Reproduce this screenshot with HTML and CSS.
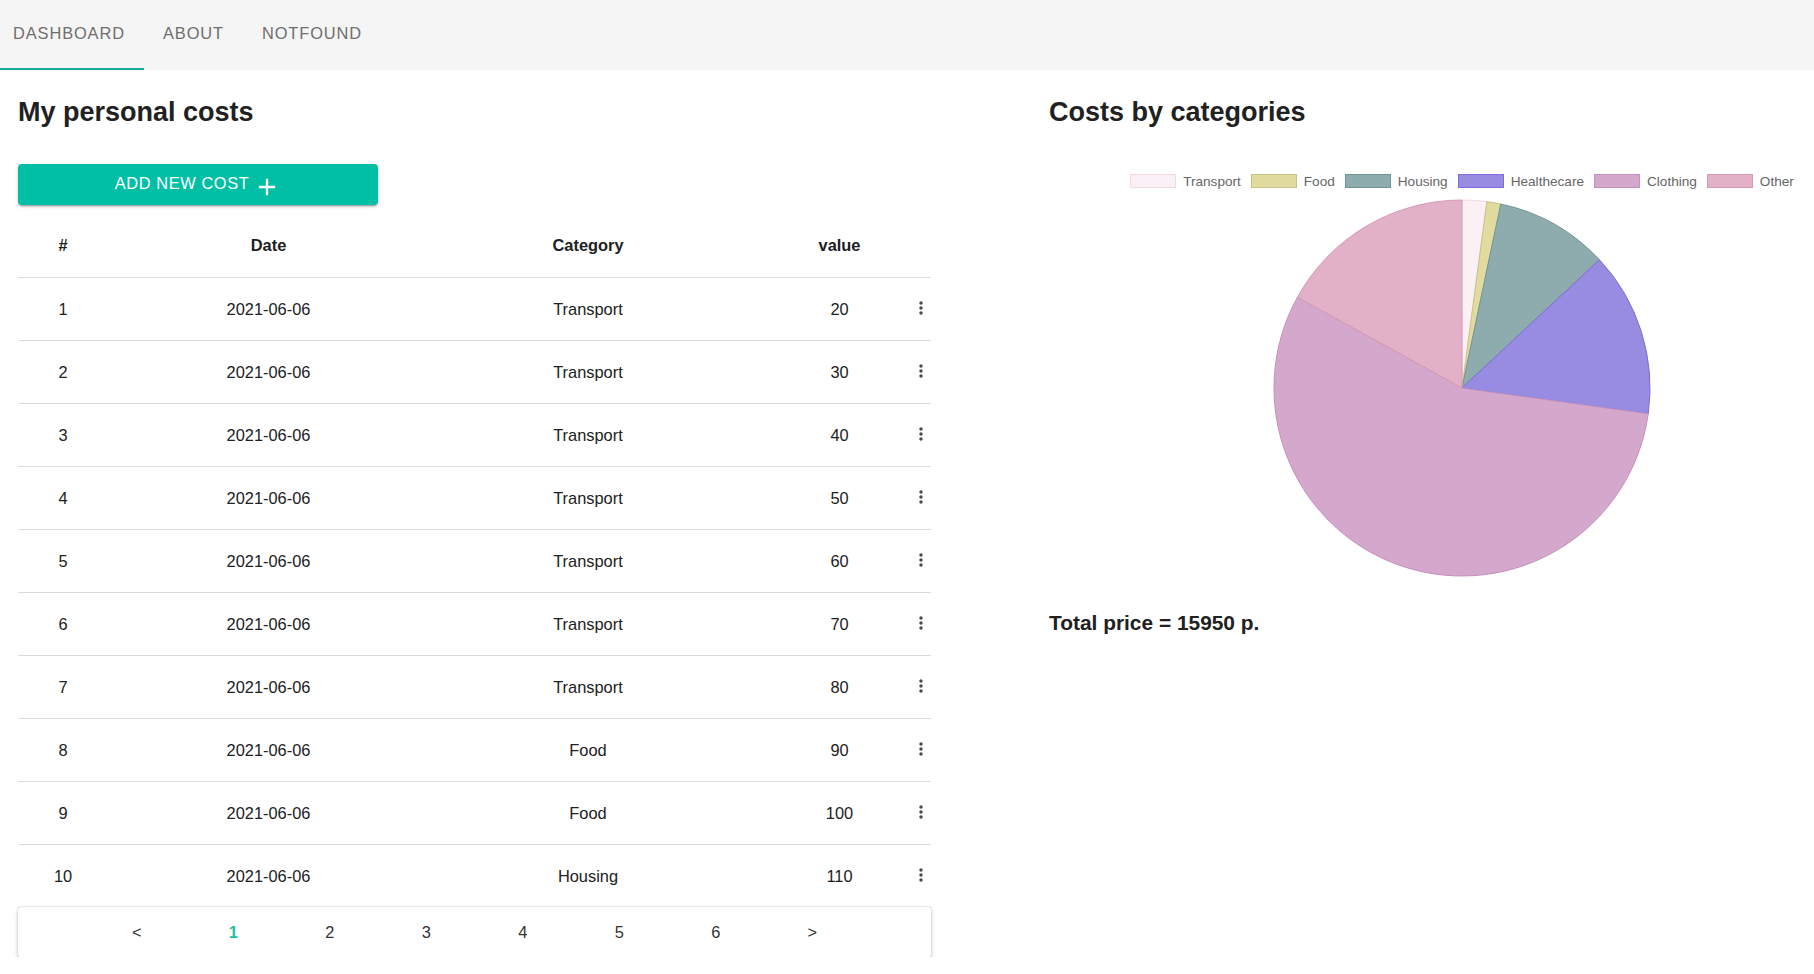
FILE: index.html
```html
<!DOCTYPE html>
<html lang="en">
<head>
<meta charset="utf-8">
<title>My personal costs</title>
<link rel="stylesheet" href="styles.css">
</head>
<body>
<header class="nav">
  <a class="tab tab-active">Dashboard</a>
  <a class="tab">About</a>
  <a class="tab">NotFound</a>
</header>
<main class="page">
  <section class="left">
    <h2 class="title">My personal costs</h2>
    <button class="add-btn"><span>Add new cost</span><svg class="plus" viewBox="0 0 24 24" width="28" height="28"><path d="M19 13h-6v6h-2v-6H5v-2h6V5h2v6h6v2z" fill="#fff"/></svg></button>
    <table class="costs">
      <colgroup><col class="c1"><col class="c2"><col class="c3"><col class="c4"><col class="c5"></colgroup>
      <thead>
        <tr><th>#</th><th>Date</th><th>Category</th><th class="val">value</th><th></th></tr>
      </thead>
      <tbody>
        <tr><td>1</td><td>2021-06-06</td><td>Transport</td><td class="val">20</td><td class="more"><svg viewBox="0 0 24 24" width="20" height="20"><path d="M12 8c1.1 0 2-.9 2-2s-.9-2-2-2-2 .9-2 2 .9 2 2 2zm0 2c-1.1 0-2 .9-2 2s.9 2 2 2 2-.9 2-2-.9-2-2-2zm0 6c-1.1 0-2 .9-2 2s.9 2 2 2 2-.9 2-2-.9-2-2-2z"/></svg></td></tr>
        <tr><td>2</td><td>2021-06-06</td><td>Transport</td><td class="val">30</td><td class="more"><svg viewBox="0 0 24 24" width="20" height="20"><path d="M12 8c1.1 0 2-.9 2-2s-.9-2-2-2-2 .9-2 2 .9 2 2 2zm0 2c-1.1 0-2 .9-2 2s.9 2 2 2 2-.9 2-2-.9-2-2-2zm0 6c-1.1 0-2 .9-2 2s.9 2 2 2 2-.9 2-2-.9-2-2-2z"/></svg></td></tr>
        <tr><td>3</td><td>2021-06-06</td><td>Transport</td><td class="val">40</td><td class="more"><svg viewBox="0 0 24 24" width="20" height="20"><path d="M12 8c1.1 0 2-.9 2-2s-.9-2-2-2-2 .9-2 2 .9 2 2 2zm0 2c-1.1 0-2 .9-2 2s.9 2 2 2 2-.9 2-2-.9-2-2-2zm0 6c-1.1 0-2 .9-2 2s.9 2 2 2 2-.9 2-2-.9-2-2-2z"/></svg></td></tr>
        <tr><td>4</td><td>2021-06-06</td><td>Transport</td><td class="val">50</td><td class="more"><svg viewBox="0 0 24 24" width="20" height="20"><path d="M12 8c1.1 0 2-.9 2-2s-.9-2-2-2-2 .9-2 2 .9 2 2 2zm0 2c-1.1 0-2 .9-2 2s.9 2 2 2 2-.9 2-2-.9-2-2-2zm0 6c-1.1 0-2 .9-2 2s.9 2 2 2 2-.9 2-2-.9-2-2-2z"/></svg></td></tr>
        <tr><td>5</td><td>2021-06-06</td><td>Transport</td><td class="val">60</td><td class="more"><svg viewBox="0 0 24 24" width="20" height="20"><path d="M12 8c1.1 0 2-.9 2-2s-.9-2-2-2-2 .9-2 2 .9 2 2 2zm0 2c-1.1 0-2 .9-2 2s.9 2 2 2 2-.9 2-2-.9-2-2-2zm0 6c-1.1 0-2 .9-2 2s.9 2 2 2 2-.9 2-2-.9-2-2-2z"/></svg></td></tr>
        <tr><td>6</td><td>2021-06-06</td><td>Transport</td><td class="val">70</td><td class="more"><svg viewBox="0 0 24 24" width="20" height="20"><path d="M12 8c1.1 0 2-.9 2-2s-.9-2-2-2-2 .9-2 2 .9 2 2 2zm0 2c-1.1 0-2 .9-2 2s.9 2 2 2 2-.9 2-2-.9-2-2-2zm0 6c-1.1 0-2 .9-2 2s.9 2 2 2 2-.9 2-2-.9-2-2-2z"/></svg></td></tr>
        <tr><td>7</td><td>2021-06-06</td><td>Transport</td><td class="val">80</td><td class="more"><svg viewBox="0 0 24 24" width="20" height="20"><path d="M12 8c1.1 0 2-.9 2-2s-.9-2-2-2-2 .9-2 2 .9 2 2 2zm0 2c-1.1 0-2 .9-2 2s.9 2 2 2 2-.9 2-2-.9-2-2-2zm0 6c-1.1 0-2 .9-2 2s.9 2 2 2 2-.9 2-2-.9-2-2-2z"/></svg></td></tr>
        <tr><td>8</td><td>2021-06-06</td><td>Food</td><td class="val">90</td><td class="more"><svg viewBox="0 0 24 24" width="20" height="20"><path d="M12 8c1.1 0 2-.9 2-2s-.9-2-2-2-2 .9-2 2 .9 2 2 2zm0 2c-1.1 0-2 .9-2 2s.9 2 2 2 2-.9 2-2-.9-2-2-2zm0 6c-1.1 0-2 .9-2 2s.9 2 2 2 2-.9 2-2-.9-2-2-2z"/></svg></td></tr>
        <tr><td>9</td><td>2021-06-06</td><td>Food</td><td class="val">100</td><td class="more"><svg viewBox="0 0 24 24" width="20" height="20"><path d="M12 8c1.1 0 2-.9 2-2s-.9-2-2-2-2 .9-2 2 .9 2 2 2zm0 2c-1.1 0-2 .9-2 2s.9 2 2 2 2-.9 2-2-.9-2-2-2zm0 6c-1.1 0-2 .9-2 2s.9 2 2 2 2-.9 2-2-.9-2-2-2z"/></svg></td></tr>
        <tr><td>10</td><td>2021-06-06</td><td>Housing</td><td class="val">110</td><td class="more"><svg viewBox="0 0 24 24" width="20" height="20"><path d="M12 8c1.1 0 2-.9 2-2s-.9-2-2-2-2 .9-2 2 .9 2 2 2zm0 2c-1.1 0-2 .9-2 2s.9 2 2 2 2-.9 2-2-.9-2-2-2zm0 6c-1.1 0-2 .9-2 2s.9 2 2 2 2-.9 2-2-.9-2-2-2z"/></svg></td></tr>
      </tbody>
    </table>
    <nav class="pager">
      <span class="pg">&lt;</span>
      <span class="pg pg-active">1</span>
      <span class="pg">2</span>
      <span class="pg">3</span>
      <span class="pg">4</span>
      <span class="pg">5</span>
      <span class="pg">6</span>
      <span class="pg">&gt;</span>
    </nav>
  </section>
  <section class="right">
    <h2 class="title">Costs by categories</h2>
    <div class="chart">
      <div class="legend">
        <span class="li"><i class="box b-transport"></i>Transport</span>
        <span class="li"><i class="box b-food"></i>Food</span>
        <span class="li"><i class="box b-housing"></i>Housing</span>
        <span class="li"><i class="box b-health"></i>Healthecare</span>
        <span class="li"><i class="box b-clothing"></i>Clothing</span>
        <span class="li"><i class="box b-other"></i>Other</span>
      </div>
      <svg class="pie" viewBox="0 0 680 380" width="680" height="380">
        <path d="M340,190 L340,2 A188,188 0 0 1 364.86,3.65 Z" fill="#fbf0f6" stroke="#f3d8e6" stroke-width="1"/>
        <path d="M340,190 L364.86,3.65 A188,188 0 0 1 378.77,6.04 Z" fill="#e1dba0" stroke="#c9c283" stroke-width="1"/>
        <path d="M340,190 L378.77,6.04 A188,188 0 0 1 477.49,61.78 Z" fill="#8eacae" stroke="#719597" stroke-width="1"/>
        <path d="M340,190 L477.49,61.78 A188,188 0 0 1 526.22,215.84 Z" fill="#978ce2" stroke="#7b6ed6" stroke-width="1"/>
        <path d="M340,190 L526.22,215.84 A188,188 0 1 1 175.42,99.14 Z" fill="#d4a8cc" stroke="#c690bc" stroke-width="1"/>
        <path d="M340,190 L175.42,99.14 A188,188 0 0 1 340,2 Z" fill="#e2b0c7" stroke="#d49ab5" stroke-width="1"/>
      </svg>
    </div>
    <p class="total">Total price = 15950 p.</p>
  </section>
</main>
</body>
</html>
```

FILE: styles.css
```css
* { box-sizing: border-box; }

body {
  margin: 0;
  font-family: "Liberation Sans", Arial, sans-serif;
  color: #212121;
  background: #fff;
}

.nav {
  display: flex;
  height: 70px;
  background: #f5f5f5;
}

.tab {
  display: flex;
  align-items: center;
  padding: 0 19px 2px;
  height: 70px;
  font-size: 16.4px;
  letter-spacing: 0.9px;
  text-transform: uppercase;
  color: #6f6f6f;
  border-bottom: 2px solid transparent;
}

.tab-active {
  width: 144px;
  padding-left: 13px;
  padding-right: 0;
  border-bottom-color: #1aaa98;
}

.page {
  display: flex;
  align-items: flex-start;
}

.left {
  width: 913px;
  margin-left: 18px;
  flex: none;
}

.right {
  margin-left: 118px;
  flex: 1;
}

.title {
  margin: 26px 0 0;
  font-size: 27px;
  line-height: 32px;
  font-weight: bold;
  color: #212121;
}

.add-btn {
  display: flex;
  align-items: center;
  justify-content: center;
  gap: 4px;
  width: 360px;
  height: 41px;
  margin-top: 36px;
  padding: 0;
  border: 0;
  border-radius: 4px;
  background: #00bfa5;
  color: #fff;
  font-family: inherit;
  font-size: 16.4px;
  letter-spacing: 0.6px;
  text-transform: uppercase;
  box-shadow: 0 3px 1px -2px rgba(0,0,0,.2), 0 2px 2px 0 rgba(0,0,0,.14), 0 1px 5px 0 rgba(0,0,0,.12);
}

.add-btn span { margin-top: -3px; }

.plus {
  margin: -6px 0 -8px;
  position: relative;
  top: 1px;
}

.costs {
  width: 913px;
  margin-top: 16px;
  border-collapse: collapse;
  table-layout: fixed;
  font-size: 16.4px;
}

.c1 { width: 90px; }
.c2 { width: 321px; }
.c3 { width: 318px; }
.c4 { width: 168px; }
.c5 { width: 16px; }

.costs th,
.costs td {
  text-align: center;
  line-height: 24px;
  border-bottom: 1px solid #dcdcdc;
  color: #212121;
}

.costs th {
  padding: 12px 0 20px;
  font-weight: bold;
}

.costs td {
  padding: 19px 0;
}

.costs .val { padding-left: 17px; }

.costs td.more {
  padding: 0;
  text-align: left;
}

.more svg {
  display: block;
  margin-left: -4px;
  margin-top: -3px;
  fill: #4a4a4a;
}

.pager {
  display: flex;
  justify-content: center;
  align-items: center;
  height: 50px;
  margin-top: -1px;
  background: #fff;
  border-radius: 3px;
  box-shadow: 0 0 0 1px rgba(0,0,0,.06), 0 2px 4px rgba(0,0,0,.14), 0 4px 10px rgba(0,0,0,.06);
  position: relative;
  font-size: 16.4px;
  color: #333;
}

.pg {
  width: 96.5px;
  text-align: center;
}

.pg-active {
  color: #1fbf9f;
  font-weight: bold;
}

.chart {
  width: 680px;
  margin-left: 73px;
}

.legend {
  display: flex;
  justify-content: center;
  align-items: center;
  gap: 10px;
  margin-top: 45px;
  margin-bottom: 1px;
  height: 16px;
  font-size: 13.6px;
  color: #666;
}

.li {
  display: flex;
  align-items: center;
}

.box {
  display: block;
  width: 46px;
  height: 14px;
  margin-right: 7px;
  border: 1px solid;
}

.b-transport { background: #fbf0f6; border-color: #f3d8e6; }
.b-food { background: #e1dba0; border-color: #c9c283; }
.b-housing { background: #8eacae; border-color: #719597; }
.b-health { background: #978ce2; border-color: #7b6ed6; }
.b-clothing { background: #d4a8cc; border-color: #c690bc; }
.b-other { background: #e2b0c7; border-color: #d49ab5; }

.pie {
  display: block;
  margin-top: 9px;
}

.total {
  margin: 33px 0 0;
  font-size: 20.9px;
  line-height: 24px;
  font-weight: bold;
  color: #212121;
}
```
